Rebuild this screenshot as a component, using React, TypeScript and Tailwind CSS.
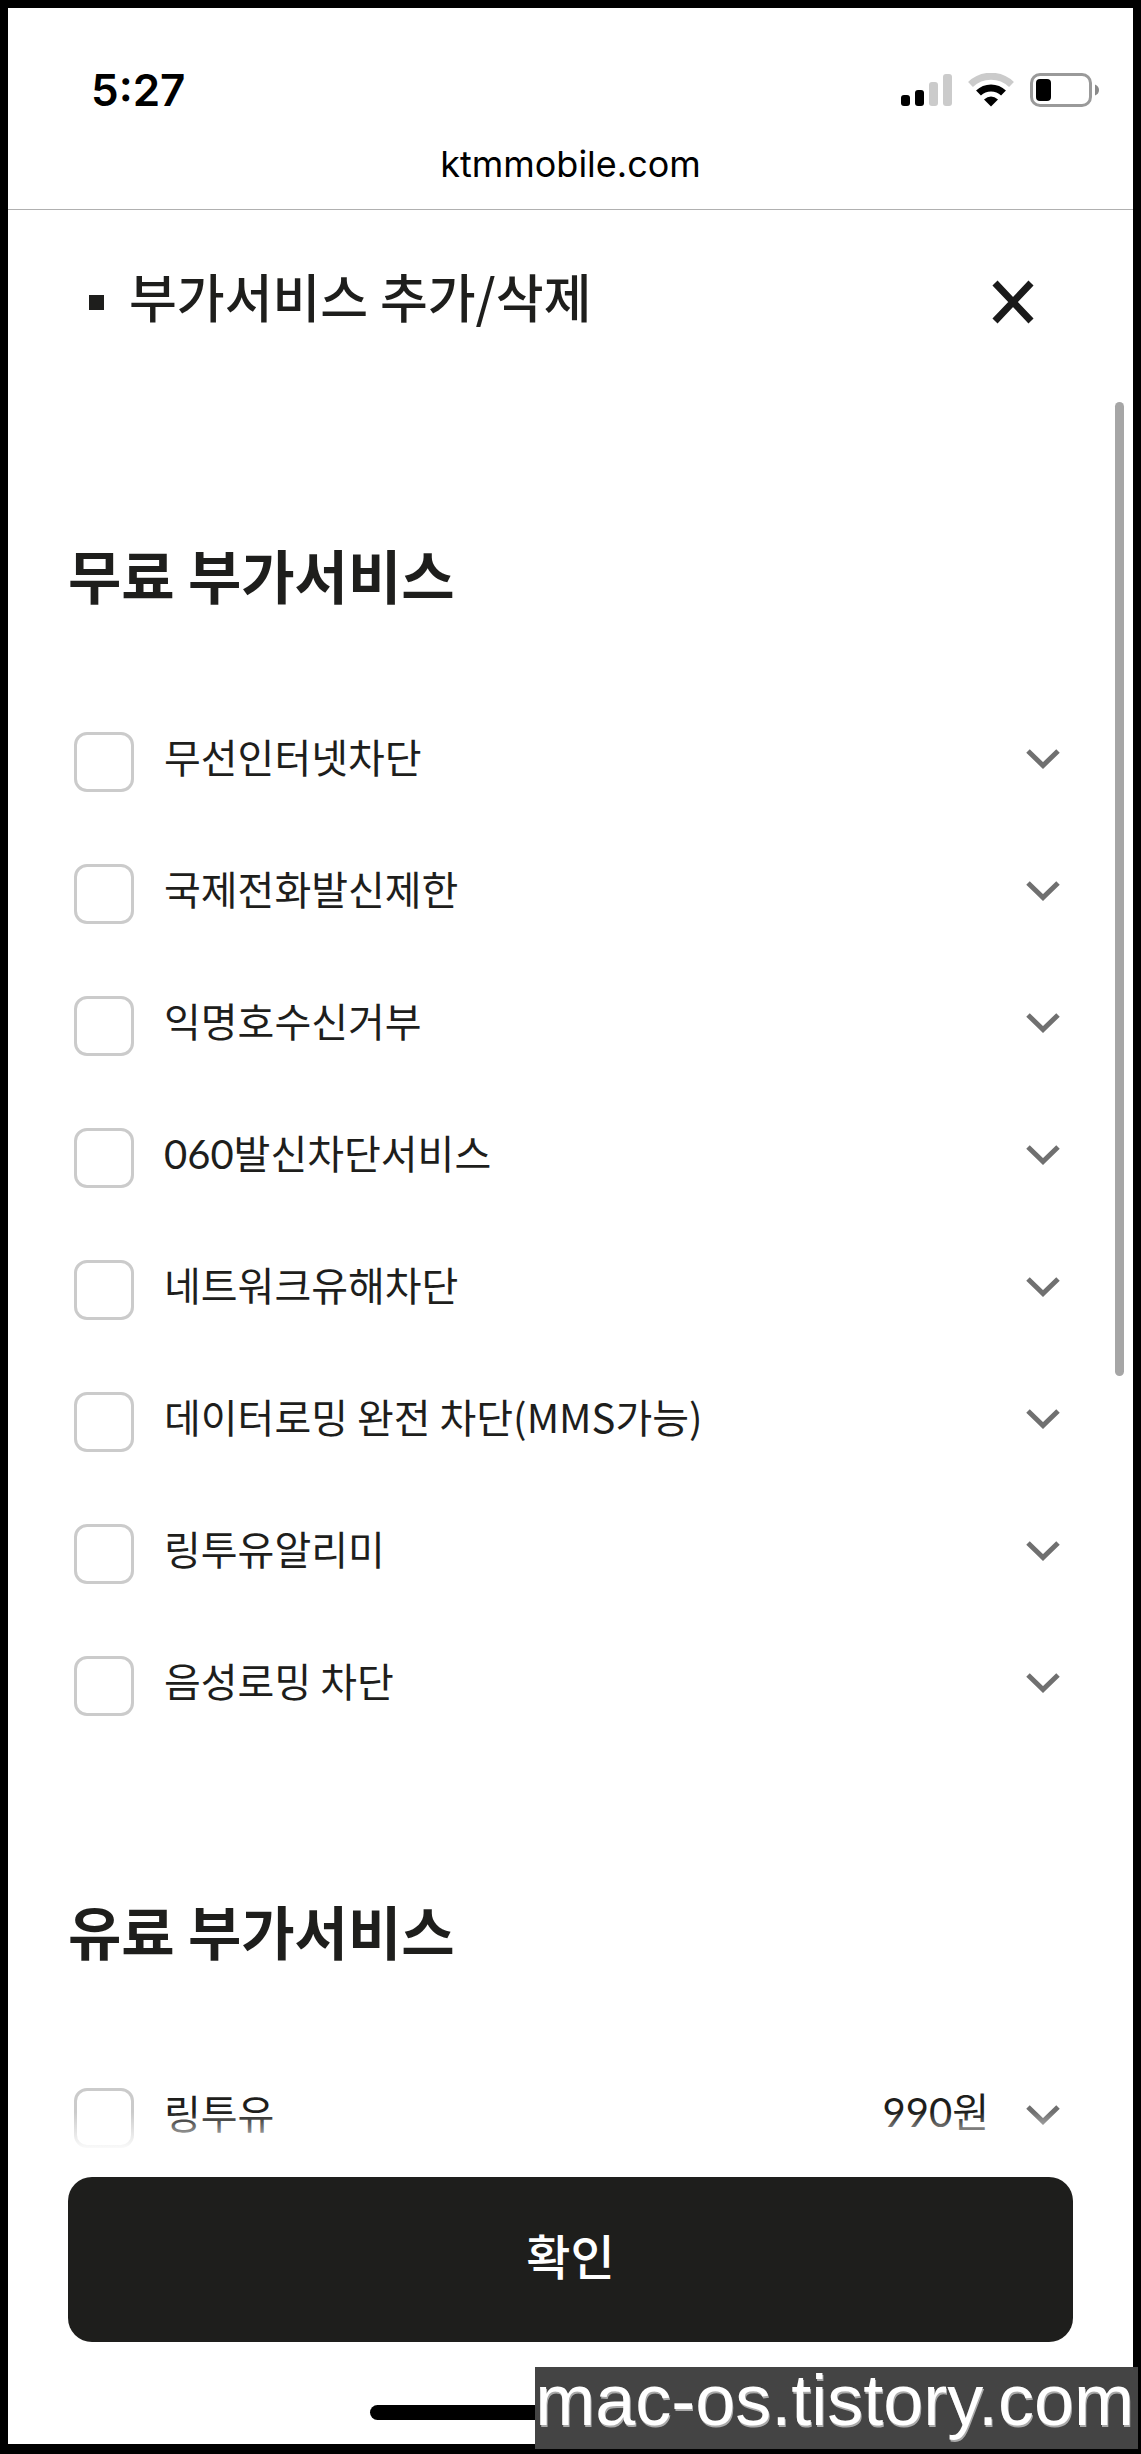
import React, { useState } from 'react';

interface Service {
  id: string;
  name: string;
  price?: string;
  // names with figures use the rounder Latin digits
  figures?: boolean;
}

const FREE_SERVICES: Service[] = [
  { id: 'wireless-block', name: '무선인터넷차단' },
  { id: 'intl-call-limit', name: '국제전화발신제한' },
  { id: 'anonymous-reject', name: '익명호수신거부' },
  { id: '060-block', name: '060발신차단서비스', figures: true },
  { id: 'network-block', name: '네트워크유해차단' },
  { id: 'data-roaming-block', name: '데이터로밍 완전 차단(MMS가능)' },
  { id: 'ring2u-alert', name: '링투유알리미' },
  { id: 'voice-roaming-block', name: '음성로밍 차단' }
];

const PAID_SERVICES: Service[] = [
  { id: 'ring2u', name: '링투유', price: '990원' }
];

const StatusIcons: React.FC = () => (
  <div className="flex items-center gap-4">
    <svg width="52" height="34" viewBox="0 0 52 34" aria-hidden="true">
      <rect x="1" y="22" width="9" height="11" rx="3" fill="#000" />
      <rect x="15" y="17" width="9" height="16" rx="3" fill="#000" />
      <rect x="29" y="9" width="9" height="24" rx="3" fill="#cbcbcb" />
      <rect x="43" y="1" width="9" height="32" rx="3" fill="#cbcbcb" />
    </svg>
    <svg width="46" height="34" viewBox="0 0 46 34" aria-hidden="true">
      <path d="M2.5 11.5A29.5 29.5 0 0 1 43.5 11.5" fill="none" stroke="#cbcbcb" strokeWidth="7" />
      <path d="M10.5 20A18 18 0 0 1 35.5 20" fill="none" stroke="#000" strokeWidth="7" />
      <path d="M23 33.500L16 26.500Q23 20.500 30 26.500Z" fill="#000" />
    </svg>
    <svg width="70" height="34" viewBox="0 0 70 34" aria-hidden="true">
      <rect x="1.500" y="1.500" width="59" height="31" rx="8.500" fill="none" stroke="#9a9a9a" strokeWidth="3" />
      <rect x="6" y="6" width="15" height="22" rx="4" fill="#000" />
      <path d="M65 11.500Q69 13 69 17T65 22.500Z" fill="#8a8a8a" />
    </svg>
  </div>
);

const ServiceRow: React.FC<{ service: Service }> = ({ service }) => {
  const [open, setOpen] = useState(false);
  return (
    <li className="flex h-[60px] items-start justify-between">
      <label className="flex items-start gap-[30px]">
        <input
          id={service.id}
          type="checkbox"
          className="size-[60px] shrink-0 appearance-none rounded-[13px] border-3 border-[#cbcbcb] bg-white checked:bg-[#1e1e1c]"
        />
        <span className={`text-[40px] ${service.figures ? "font-[Lato,'Noto_Sans_CJK_KR',sans-serif] leading-[52px]" : 'leading-[48px]'}`}>
          {service.name}
        </span>
      </label>
      <div className="flex h-[52px] items-center gap-[36px]">
        {service.price && (
          <span className="pb-1 font-[Lato,'Noto_Sans_CJK_KR',sans-serif] text-[40px] leading-[48px]">{service.price}</span>
        )}
        <button aria-label={`${service.name} 상세보기`} aria-expanded={open} onClick={() => setOpen(!open)}>
          <svg width="36" height="24" viewBox="0 0 36 24" className="block" fill="none" stroke="#707070" strokeWidth="5">
            <path d="M3 5L18 19.500L33 5" />
          </svg>
        </button>
      </div>
    </li>
  );
};

const ServiceSection: React.FC<{ title: string; services: Service[] }> = ({ title, services }) => (
  <section>
    <h2 className="mb-[121px] text-[58px] leading-[74px] font-bold">{title}</h2>
    <ul className="flex flex-col gap-[72px] pr-3 pl-1.5">
      {services.map(service => (
        <ServiceRow key={service.id} service={service} />
      ))}
    </ul>
  </section>
);

export default function App() {
  return (
    <div className="relative flex min-h-screen flex-col bg-black px-2 pt-2 pb-2.5 font-['Noto_Sans_CJK_KR',sans-serif] text-[#1e1e1c]">
      <div className="flex flex-1 flex-col bg-white">
        <header className="border-b border-[#b0b0b0] pt-[58px] pb-[23px] font-[Inter,sans-serif] text-black">
          <div className="flex items-center justify-between pr-[33px] pl-[83px]">
            <span className="text-[44px] leading-[48px] font-semibold">5:27</span>
            <StatusIcons />
          </div>
          <p className="mt-7 text-center text-[36px] leading-[44px]">ktmmobile.com</p>
        </header>

        <div className="flex items-center justify-between pt-[54px] pr-[96px] pb-[50px] pl-[81px]">
          <div className="flex items-center gap-[25px]">
            <span className="size-[15px] bg-[#1e1e1c]" />
            <h1 className="pb-3 text-[52px] leading-[64px] font-medium">부가서비스 추가/삭제</h1>
          </div>
          <button aria-label="닫기">
            <svg width="48" height="48" viewBox="0 0 48 48" className="block" fill="none" stroke="#1a1a1a" strokeWidth="7">
              <path d="M6 5L42 43M42 5L6 43" />
            </svg>
          </button>
        </div>

        <main className="relative flex flex-1 flex-col gap-[177px] px-[60px] pt-[147px]">
          <ServiceSection title="무료 부가서비스" services={FREE_SERVICES} />
          <ServiceSection title="유료 부가서비스" services={PAID_SERVICES} />
          {/* scroll thumb */}
          <div className="absolute top-3 right-[9px] h-[974px] w-[9px] rounded-full bg-[#a6a6a6]" />
        </main>

        <footer className="relative px-[60px] pt-[29px] pb-6">
          {/* fades the list out above the button */}
          <div className="pointer-events-none absolute inset-x-0 -top-9 h-10 bg-linear-to-t from-white to-transparent" />
          <button className="block h-[165px] w-full rounded-3xl bg-[#1e1e1c] pb-3 text-[48px] leading-[72px] font-medium text-white">
            확인
          </button>
          <div className="mx-auto mt-[63px] h-[15px] w-[402px] rounded-full bg-black" />
        </footer>
      </div>

      <div className="absolute right-[3px] bottom-[5px] bg-[#444] pr-1 pb-4 font-['Liberation_Sans',sans-serif] text-[72px] leading-[66px] text-white [text-shadow:1px_2px_0_#aaa]">
        mac-os.tistory.com
      </div>
    </div>
  );
}
